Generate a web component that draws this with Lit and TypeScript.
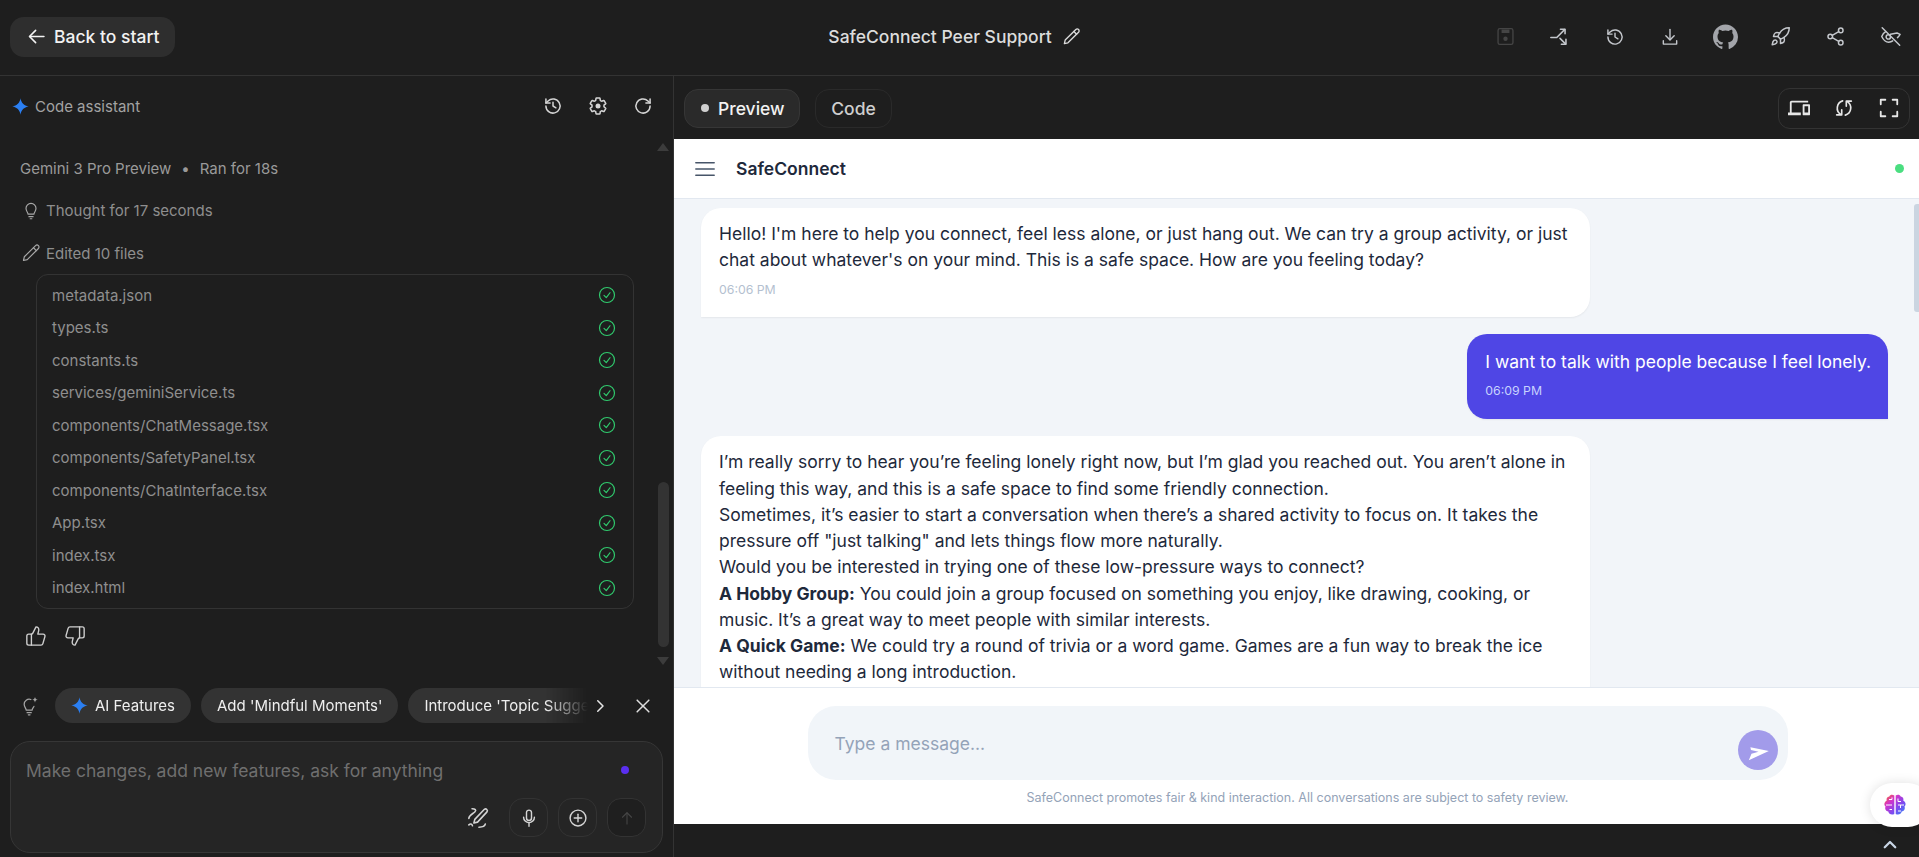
import { LitElement, html, css, svg } from "lit";
import { customElement } from "lit/decorators.js";

const ic = (body: unknown, size = 20, sw = 2, cls = "") => html`<svg class="ic ${cls}" width=${size} height=${size} viewBox="0 0 24 24" fill="none" stroke="currentColor" stroke-width=${sw} stroke-linecap="round" stroke-linejoin="round">${body}</svg>`;

const history = svg`<path d="M3.5 12a8.5 8.5 0 1 0 2.6-6.1L3.5 8.5"/><path d="M3.5 3.5v5h5"/><path d="M12 7.5V12l3.5 2.2"/>`;
const gear = svg`<path d="M19.14 12.94c.04-.3.06-.61.06-.94 0-.32-.02-.64-.07-.94l2.03-1.58a.49.49 0 0 0 .12-.61l-1.92-3.32a.488.488 0 0 0-.59-.22l-2.39.96c-.5-.38-1.03-.7-1.62-.94l-.36-2.54a.484.484 0 0 0-.48-.41h-3.84c-.24 0-.43.17-.47.41l-.36 2.54c-.59.24-1.13.57-1.62.94l-2.39-.96c-.22-.08-.47 0-.59.22L2.74 8.87c-.12.21-.08.47.12.61l2.03 1.58c-.05.3-.09.63-.09.94s.02.64.07.94l-2.03 1.58a.49.49 0 0 0-.12.61l1.92 3.32c.12.22.37.29.59.22l2.39-.96c.5.38 1.03.7 1.62.94l.36 2.54c.05.24.24.41.48.41h3.84c.24 0 .44-.17.47-.41l.36-2.54c.59-.24 1.13-.56 1.62-.94l2.39.96c.22.08.47 0 .59-.22l1.92-3.32c.12-.22.07-.47-.12-.61l-2.01-1.58z"/><circle cx="12" cy="12" r="3" fill="currentColor" stroke="none"/>`;
const refresh = svg`<path d="M20.5 12a8.5 8.5 0 1 1-2.6-6.1l2.6 2.6"/><path d="M20.5 3.5v5h-5"/>`;
const pencil = svg`<path d="M17.5 3.2a2.4 2.4 0 0 1 3.4 3.4L7.5 20 3 21l1-4.5Z"/><path d="M15 5.7l3.4 3.4"/>`;
const bulb = svg`<path d="M8.5 17c0-2-2.5-3-2.5-7a6 6 0 0 1 12 0c0 4-2.5 5-2.5 7Z"/><path d="M9.5 20h5"/><path d="M11 22.5h2"/>`;
const bulbSpark = svg`<path d="M13 4.2A6 6 0 0 0 5 10c0 3.5 2.4 4.6 2.5 7h7c.1-2 1.5-3 2.2-4.5"/><path d="M8.5 20h5"/><path d="M10 22.5h2"/><path d="M18 1c.3 2.3 1.2 3.2 3.5 3.5C19.2 4.8 18.300 5.700 18 8c-.3-2.300-1.200-3.200-3.500-3.500C16.800 4.200 17.700 3.300 18 1Z" fill="currentColor" stroke="none"/>`;
const star = svg`<path d="M12 0.500C13 7 17 11 23.500 12 17 13 13 17 12 23.500 11 17 7 13 0.500 12 7 11 11 7 12 0.500Z" fill="#2b7ff2" stroke="none"/>`;
const check = svg`<circle cx="12" cy="12" r="10"/><path d="M8 12.500l3 3 5-6.500"/>`;
const thumbUp = svg`<path d="M7 10v12"/><path d="M15 5.880 14 10h5.830a2 2 0 0 1 1.920 2.560l-2.330 8A2 2 0 0 1 17.500 22H4a2 2 0 0 1-2-2v-8a2 2 0 0 1 2-2h2.760a2 2 0 0 0 1.790-1.110L12 2a3.130 3.130 0 0 1 3 3.880Z"/>`;
const thumbDown = svg`<path d="M17 14V2"/><path d="M9 18.120 10 14H4.170a2 2 0 0 1-1.920-2.560l2.330-8A2 2 0 0 1 6.500 2H20a2 2 0 0 1 2 2v8a2 2 0 0 1-2 2h-2.760a2 2 0 0 0-1.790 1.110L12 22a3.130 3.130 0 0 1-3-3.880Z"/>`;
const saveI = svg`<rect x="3.500" y="3" width="17" height="18" rx="2"/><rect x="7.500" y="4" width="9" height="4" fill="currentColor" stroke="none"/><circle cx="12" cy="14.500" r="2.500" fill="currentColor" stroke="none"/>`;
const merge = svg`<path d="M2 12.500h6.500L17 4"/><path d="M12.500 3.500h5v5"/><path d="M12 13.500l6 6"/><path d="M18.500 14.500v5.500H13.500"/>`;
const download = svg`<path d="M12 3v12"/><path d="M7 10.500l5 5 5-5"/><path d="M4 16.500V20.500h16v-4"/>`;
const rocket = svg`<path d="M4.500 16.500c-1.500 1.260-2 5-2 5s3.740-.5 5-2c.710-.840.700-2.130-.090-2.910a2.180 2.180 0 0 0-2.910-.090z"/><path d="m12 15-3-3a22 22 0 0 1 2-3.950A12.880 12.880 0 0 1 22 2c0 2.720-.780 7.500-6 11a22.350 22.350 0 0 1-4 2z"/><path d="M9 12H4s.550-3.030 2-4c1.620-1.080 5 0 5 0"/><path d="M12 15v5s3.030-.550 4-2c1.080-1.620 0-5 0-5"/>`;
const share = svg`<circle cx="18" cy="5" r="2.600"/><circle cx="6" cy="12" r="2.600"/><circle cx="18" cy="19" r="2.600"/><path d="m8.300 13.400 7.400 4.200"/><path d="m15.700 6.400-7.400 4.200"/>`;
const eyeOff = svg`<path d="M6.500 6.500C3.500 8 2 12 2 12s3 6.500 8 6.500c2 0 3.500-.7 4.500-1.500"/><path d="M12 9.500l7.500-1.500L23 9.500c-.6 1.500-1.800 2.800-3 3.800"/><circle cx="9.500" cy="12.500" r="2.500"/><path d="M2.500 2l20 20"/>`;
const sync = svg`<path d="M10.500 4.200A8.200 8.200 0 0 0 8.500 19"/><path d="M9.500 14v5.500H4"/><path d="M13.500 19.800A8.200 8.200 0 0 0 15.500 5"/><path d="M14.500 10V4.500H20"/>`;
const fullscreen = svg`<path d="M3 8V3h5"/><path d="M16 3h5v5"/><path d="M21 16v5h-5"/><path d="M8 21H3v-5"/>`;
const wand = svg`<path d="M19 2.500a2 2 0 0 1 2.800 2.800L11.500 16.500l-4 1 1-4Z"/><path d="M5.500 2c3.500 0 5 1.200 3.200 3.200S2 9 2 12.500"/><path d="M13 22c3.500 0 6.500-.5 7-3.500"/><path d="M2 19.500c1.500-1.500 3.500-1.500 4 1"/>`;
const mic = svg`<path d="M12 2.500a3 3 0 0 0-3 3v6.500a3 3 0 0 0 6 0V5.500a3 3 0 0 0-3-3Z"/><path d="M18.500 11a6.500 6.500 0 0 1-13 0"/><path d="M12 17.500v4.500"/>`;
const plus = svg`<circle cx="12" cy="12" r="9.500"/><path d="M12 7.500v9"/><path d="M7.500 12h9"/>`;

const FILES = ["metadata.json","types.ts","constants.ts","services/geminiService.ts","components/ChatMessage.tsx","components/SafetyPanel.tsx","components/ChatInterface.tsx","App.tsx","index.tsx","index.html"];

@customElement("app-root")
export class AppRoot extends LitElement {
  static styles = css`
    :host { display: block; width: 100%; height: 857px; overflow: hidden; background: #1e1e1e; color: #e3e3e3; font-family: Inter, "Noto Sans", sans-serif; position: relative; }
    * { box-sizing: border-box; }
    .ic { display: block; flex: none; }
    .top { height: 76px; border-bottom: 1px solid #333; display: grid; grid-template-columns: 1fr auto 1fr; align-items: center; padding: 0 18px 2px 10px; }
    .back { justify-self: start; width: 165px; height: 40px; border-radius: 14px; background: #2e2e2e; display: flex; align-items: center; gap: 7px; padding-left: 16px; font-size: 17.500px; font-weight: 500; color: #f2f2f2; }
    .title { display: flex; align-items: center; gap: 10px; font-size: 17.500px; font-weight: 500; color: #dcdcdc; margin-left: -2px; }
    .actions { justify-self: end; display: flex; align-items: center; gap: 33px; color: #c4c7cc; }
    .actions .slot { width: 22px; display: flex; justify-content: center; }
    .save { color: #454545; }
    .gh { color: #a3a5aa; }
    .main { display: flex; height: 781px; }
    .left { width: 674px; flex: none; border-right: 1px solid #333; display: flex; flex-direction: column; }
    .ahead { height: 60px; display: flex; align-items: center; padding: 0 20px 0 12px; font-size: 15px; color: #a3a3a3; flex: none; }
    .ahead .name { margin-left: 6px; flex: 1; }
    .ahead .tools { display: flex; gap: 25px; color: #d5d5d5; }
    .scroll { flex: none; height: 535px; display: flex; }
    .content { width: 657px; padding: 22px 0 0 20px; font-size: 15px; color: #9a9a9a; }
    .meta { height: 20px; display: flex; align-items: center; }
    .meta .sep { margin: 0 10px; }
    .step { height: 20px; margin-top: 22px; padding-left: 1px; display: flex; align-items: center; gap: 5px; color: #8e8e8e; }
    .step .ic { color: #a8a8a8; }
    .step.e { margin-top: 23px; }
    .files { margin: 11px 0 0 16px; width: 598px; border: 1px solid #333; border-radius: 12px; padding: 4px 0; }
    .file { height: 32.500px; display: flex; align-items: center; justify-content: space-between; padding: 0 17px 0 15px; color: #8f8f8f; }
    .file .ic { color: #30c96d; }
    .thumbs { display: flex; gap: 17px; margin: 16px 0 0 5px; color: #cfcfcf; }
    .sb { width: 12px; flex: none; display: flex; flex-direction: column; align-items: center; padding: 7px 0 6px; }
    .tri { width: 0; height: 0; border-left: 6px solid transparent; border-right: 6px solid transparent; }
    .tri.u { border-bottom: 8px solid #3c3c3c; }
    .tri.d { border-top: 8px solid #3c3c3c; margin-top: 10px; }
    .sp { flex: 1; }
    .thumb { width: 11px; height: 165px; border-radius: 6px; background: #333; }
    .chips { flex: none; margin-top: 17px; height: 35px; display: flex; align-items: center; padding-left: 20px; }
    .chips .bulb { color: #a5a5a5; width: 35px; }
    .scr { width: 533px; display: flex; gap: 10px; overflow: hidden; -webkit-mask-image: linear-gradient(to right, #000 92%, transparent 100%); mask-image: linear-gradient(to right, #000 92%, transparent 100%); }
    .chip { flex: none; height: 35px; border-radius: 18px; background: #333; display: flex; align-items: center; gap: 7px; padding: 0 16px; font-size: 15px; color: #efefef; white-space: nowrap; }
    .chev { margin-left: 3px; color: #e5e5e5; }
    .x { margin-left: 24px; color: #dedede; }
    .input { flex: none; margin: 18px 0 0 10px; width: 653px; height: 112px; border: 1px solid #363636; border-radius: 20px; background: #252525; display: flex; flex-direction: column; padding: 16px 16px 0 15px; }
    .ph { display: flex; align-items: center; justify-content: space-between; height: 24px; font-size: 17.500px; color: #6f6f6f; padding-right: 14px; }
    .dot { width: 8px; height: 8px; border-radius: 50%; background: #5a2ff0; margin-right: 3px; }
    .tb { display: flex; justify-content: flex-end; align-items: center; gap: 10px; margin-top: 16px; color: #d5d5d5; }
    .wand { margin-right: 10px; }
    .rb { width: 39px; height: 39px; border: 1px solid #333; border-radius: 14px; display: flex; align-items: center; justify-content: center; }
    .rb.off { background: #1f1f1f; color: #454545; }
    .right { flex: 1; min-width: 0; display: flex; flex-direction: column; }
    .pbar { height: 63px; flex: none; display: flex; align-items: center; padding: 1px 9px 0 10px; gap: 15px; }
    .tab { height: 39px; border-radius: 14px; display: flex; align-items: center; font-size: 17.500px; font-weight: 500; }
    .tab.on { width: 116px; background: #2a2a2a; border: 1px solid #363636; padding-left: 16px; gap: 9px; color: #f2f2f2; }
    .tab.on i { width: 8px; height: 8px; border-radius: 50%; background: #d0d0d0; }
    .tab.off { width: 77px; border: 1px solid #2a2a2a; justify-content: center; color: #cfcfcf; }
    .pbar .sp { flex: 1; }
    .dev { height: 41px; border: 1px solid #333; border-radius: 12px; display: flex; align-items: center; gap: 23px; padding: 0 9px; color: #e6e6e6; }
    .frame { height: 685px; flex: none; background: #fff; display: flex; flex-direction: column; color: #1e293b; }
    .hdr { height: 60px; flex: none; border-bottom: 1px solid #e2e8f0; display: flex; align-items: center; padding: 0 15px 0 21px; }
    .hdr .brand { flex: 1; margin-left: 21px; font-size: 17.500px; font-weight: 600; }
    .hdr .on { width: 9px; height: 9px; border-radius: 50%; background: #4ade80; }
    .hdr .ham { color: #475569; }
    .chat { flex: 1; min-height: 0; background: #f2f5f9; display: flex; overflow: hidden; }
    .msgs { flex: 1; min-width: 0; padding: 9px 0 0 27px; display: flex; flex-direction: column; align-items: flex-start; gap: 17.500px; }
    .bub { background: #fff; border-radius: 20px 20px 20px 0; padding: 13px 18px 19px; width: 889px; font-size: 17.500px; line-height: 26.250px; flex: none; box-shadow: 0 1px 2px rgba(0,0,0,.06); }
    .bub .t { font-size: 12.300px; line-height: 16px; margin-top: 8px; color: #b4bfd0; }
    .bub.me { align-self: flex-end; margin-right: 26px; width: auto; background: #4f46e5; color: #fff; border-radius: 20px 20px 0 20px; padding: 15px 17px 20px 18px; }
    .bub.me .t { color: #c7d2fe; margin-top: 7.500px; }
    .csb { width: 5px; flex: none; padding-top: 5px; }
    .csb div { height: 108px; border-radius: 3px 0 0 3px; background: #cbd5e1; }
    .foot { height: 137px; flex: none; background: #fff; border-top: 1px solid #e2e8f0; display: flex; flex-direction: column; align-items: center; padding: 18px 0 0 2px; }
    .box { width: 980px; height: 74px; border-radius: 28px; background: #f1f5f9; display: flex; align-items: center; padding: 0 10px 0 27px; }
    .box span { flex: 1; font-size: 17.500px; color: #94a3b8; }
    .send { width: 40px; height: 40px; border-radius: 50%; background: #a29bea; color: #fff; display: flex; align-items: center; justify-content: center; margin-top: 14px; }
    .note { margin-top: 10px; font-size: 12.500px; color: #94a3b8; }
    .bot { height: 33px; flex: none; }
    .badge { position: absolute; left: 1870px; top: 783px; width: 60px; height: 44px; border-radius: 22px; background: #fff; box-shadow: 0 0 12px rgba(0,0,0,.12); display: flex; align-items: center; padding-left: 13px; }
    .up { position: absolute; left: 1881px; top: 836px; color: #c9d6e6; }
  `;

  render() {
    return html`
      <div class="top">
        <div class="back">${ic(svg`<path d="M20.500 12H4.500"/><path d="M11 5 4 12l7 7"/>`, 21, 1.800)}<span>Back to start</span></div>
        <div class="title"><span>SafeConnect Peer Support</span>${ic(pencil, 19, 1.700)}</div>
        <div class="actions">
          <div class="slot save">${ic(saveI, 21, 1.500)}</div>
          <div class="slot">${ic(merge, 22, 1.700)}</div>
          <div class="slot">${ic(history, 20, 1.700)}</div>
          <div class="slot">${ic(download, 20, 1.700)}</div>
          <div class="slot gh"><svg class="ic" width="25" height="25" viewBox="0 0 24 24" fill="currentColor"><path d="M12 .5C5.370.5 0 5.870 0 12.500c0 5.300 3.440 9.800 8.200 11.380.6.110.820-.260.820-.580v-2.030c-3.340.730-4.040-1.610-4.040-1.610-.550-1.390-1.340-1.760-1.340-1.760-1.090-.750.080-.730.080-.730 1.200.080 1.840 1.240 1.840 1.240 1.070 1.830 2.800 1.300 3.490 1 .110-.780.420-1.310.760-1.610-2.670-.3-5.470-1.330-5.470-5.930 0-1.310.470-2.380 1.240-3.220-.130-.3-.540-1.520.120-3.180 0 0 1.010-.320 3.300 1.230a11.500 11.500 0 0 1 6.010 0c2.290-1.550 3.300-1.230 3.300-1.230.660 1.660.250 2.880.120 3.180.770.840 1.240 1.910 1.240 3.220 0 4.610-2.810 5.630-5.480 5.920.430.370.810 1.100.810 2.220v3.290c0 .320.220.7.830.580A12 12 0 0 0 24 12.500C24 5.870 18.630.5 12 .5z"/></svg></div>
          <div class="slot">${ic(rocket, 21, 1.700)}</div>
          <div class="slot">${ic(share, 21, 1.700)}</div>
          <div class="slot">${ic(eyeOff, 21, 1.700)}</div>
        </div>
      </div>
      <div class="main">
        <div class="left">
          <div class="ahead">
            ${ic(star, 17)}<span class="name">Code assistant</span>
            <div class="tools">${ic(history, 20, 1.800)}${ic(gear, 20, 1.800)}${ic(refresh, 20, 1.800)}</div>
          </div>
          <div class="scroll">
            <div class="content">
              <div class="meta"><span>Gemini 3 Pro Preview</span><span class="sep">•</span><span>Ran for 18s</span></div>
              <div class="step">${ic(bulb, 20, 1.400)}<span>Thought for 17 seconds</span></div>
              <div class="step e">${ic(pencil, 20, 1.400)}<span>Edited 10 files</span></div>
              <div class="files">
                ${FILES.map((f) => html`<div class="file"><span>${f}</span>${ic(check, 18, 1.600)}</div>`)}
              </div>
              <div class="thumbs">${ic(thumbUp, 22, 1.500)}${ic(thumbDown, 22, 1.500)}</div>
            </div>
            <div class="sb"><div class="tri u"></div><div class="sp"></div><div class="thumb"></div><div class="tri d"></div></div>
          </div>
          <div class="chips">
            <div class="bulb">${ic(bulbSpark, 20, 1.500)}</div>
            <div class="scr">
              <div class="chip">${ic(star, 17)}<span>AI Features</span></div>
              <div class="chip">Add 'Mindful Moments'</div>
              <div class="chip">Introduce 'Topic Suggestions'</div>
            </div>
            <div class="chev">${ic(svg`<path d="M9 5l7 7-7 7"/>`, 18, 2)}</div>
            <div class="x">${ic(svg`<path d="M5 5l14 14"/><path d="M19 5 5 19"/>`, 20, 1.800)}</div>
          </div>
          <div class="input">
            <div class="ph"><span>Make changes, add new features, ask for anything</span><div class="dot"></div></div>
            <div class="tb">
              <div class="wand">${ic(wand, 22, 1.700)}</div>
              <div class="rb">${ic(mic, 20, 1.700)}</div>
              <div class="rb">${ic(plus, 20, 1.700)}</div>
              <div class="rb off">${ic(svg`<path d="M12 20V5"/><path d="M6 11l6-6 6 6"/>`, 18, 1.500)}</div>
            </div>
          </div>
        </div>
        <div class="right">
          <div class="pbar">
            <div class="tab on"><i></i><span>Preview</span></div>
            <div class="tab off">Code</div>
            <div class="sp"></div>
            <div class="dev">
              <svg class="ic" width="22" height="22" viewBox="0 0 24 24" fill="currentColor"><path d="M4 6h18V4H4c-1.100 0-2 .9-2 2v11H0v3h14v-3H4V6zm19 2h-6c-.550 0-1 .450-1 1v10c0 .550.450 1 1 1h6c.550 0 1-.450 1-1V9c0-.550-.450-1-1-1zm-1 9h-4v-7h4v7z"/></svg>
              ${ic(sync, 22, 1.800)}${ic(fullscreen, 22, 2)}
            </div>
          </div>
          <div class="frame">
            <div class="hdr">
              <div class="ham">${ic(svg`<path d="M1 4.500h22"/><path d="M1 12h22"/><path d="M1 19.500h22"/>`, 20, 1.800)}</div>
              <div class="brand">SafeConnect</div>
              <div class="on"></div>
            </div>
            <div class="chat">
              <div class="msgs">
                <div class="bub">
                  <div>Hello! I'm here to help you connect, feel less alone, or just hang out. We can try a group activity, or just chat about whatever's on your mind. This is a safe space. How are you feeling today?</div>
                  <div class="t">06:06 PM</div>
                </div>
                <div class="bub me">
                  <div>I want to talk with people because I feel lonely.</div>
                  <div class="t">06:09 PM</div>
                </div>
                <div class="bub">
                  <div>I’m really sorry to hear you’re feeling lonely right now, but I’m glad you reached out. You aren’t alone in feeling this way, and this is a safe space to find some friendly connection.</div>
                  <div>Sometimes, it’s easier to start a conversation when there’s a shared activity to focus on. It takes the pressure off "just talking" and lets things flow more naturally.</div>
                  <div>Would you be interested in trying one of these low-pressure ways to connect?</div>
                  <div><b>A Hobby Group:</b> You could join a group focused on something you enjoy, like drawing, cooking, or music. It’s a great way to meet people with similar interests.</div>
                  <div><b>A Quick Game:</b> We could try a round of trivia or a word game. Games are a fun way to break the ice without needing a long introduction.</div>
                </div>
              </div>
              <div class="csb"><div></div></div>
            </div>
            <div class="foot">
              <div class="box"><span>Type a message...</span>
                <div class="send"><svg class="ic" width="26" height="26" viewBox="0 0 24 24" fill="currentColor"><path d="M3.500 2l1.500 7.500L22 13 3.500 21.500 6 15.500l6.500-2-7-1.500Z"/></svg></div>
              </div>
              <div class="note">SafeConnect promotes fair &amp; kind interaction. All conversations are subject to safety review.</div>
            </div>
          </div>
          <div class="bot"></div>
        </div>
      </div>
      <div class="badge">
        <svg class="ic" width="24" height="24" viewBox="0 0 24 24">
          <defs><linearGradient id="bg" x1="0" y1="0" x2="1" y2="1"><stop offset="0" stop-color="#f97316"/><stop offset=".3" stop-color="#d633c8"/><stop offset=".65" stop-color="#7c4af0"/><stop offset="1" stop-color="#2f8bf5"/></linearGradient></defs>
          <path fill="url(#bg)" d="M11.300 2.500C9.500 1 7 1.500 6.300 3.500 4 3.700 3 5.700 3.800 7.500 1.500 8.700 0.500 11.500 2.500 13.500 1.500 16 3 18.300 5.300 18.500 5.800 21 8.500 22.500 11.300 21ZM12.700 2.500C14.500 1 17 1.500 17.700 3.500 20 3.700 21 5.700 20.200 7.500 22.500 8.700 23.500 11.500 21.500 13.500 22.500 16 21 18.300 18.700 18.500 18.200 21 15.500 22.500 12.700 21Z"/>
          <g stroke="#fff" stroke-width="1" fill="none"><path d="M3 12h6"/><path d="M6 6.500h3v-2"/><path d="M6.500 16.500H9"/><path d="M15 5.500v3h3"/><path d="M15 12h6"/><path d="M17.500 12v3"/><path d="M15 18h3"/></g>
        </svg>
      </div>
      <div class="up">${ic(svg`<path d="M5 15l7-7 7 7"/>`, 18, 3)}</div>
    `;
  }
}
